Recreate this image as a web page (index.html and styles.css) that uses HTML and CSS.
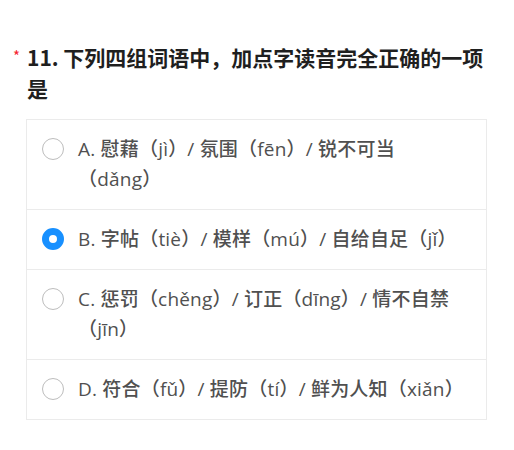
FILE: index.html
```html
<!DOCTYPE html>
<html lang="zh-CN">
<head>
<meta charset="utf-8">
<link rel="stylesheet" href="styles.css">
</head>
<body>
<div class="question">
  <div class="title"><span class="req">*</span><span class="title-text">11. 下列四组词语中，加点字读音完全正确的一项是</span></div>
  <div class="options">
    <div class="option"><span class="radio"></span><span class="label">A. 慰藉（jì）/ 氛围（fēn）/ 锐不可当<br>（dǎng）</span></div>
    <div class="option"><span class="radio checked"></span><span class="label">B. 字帖（tiè）/ 模样（mú）/ 自给自足（jǐ）</span></div>
    <div class="option"><span class="radio"></span><span class="label">C. 惩罚（chěng）/ 订正（dīng）/ 情不自禁<br>（jīn）</span></div>
    <div class="option"><span class="radio"></span><span class="label">D. 符合（fǔ）/ 提防（tí）/ 鲜为人知（xiǎn）</span></div>
  </div>
</div>
</body>
</html>
```
FILE: styles.css
```css
html, body {
  margin: 0;
  padding: 0;
  background: #fff;
}
body {
  font-family: "Noto Sans CJK SC", "Noto Sans", sans-serif;
}
.question {
  padding: 42px 0 0 0;
  width: 500px;
}
.title {
  display: flex;
  align-items: flex-start;
  padding-left: 13px;
}
.req {
  color: #f5222d;
  font-size: 15px;
  line-height: 20px;
  width: 14px;
  flex: none;
  padding-top: 4px;
}
.title-text {
  font-size: 21px;
  line-height: 31px;
  font-weight: bold;
  color: #1f1f1f;
}
.options {
  margin: 15px 0 0 26px;
  width: 459px;
  border: 1px solid #ebebeb;
}
.option {
  display: flex;
  align-items: flex-start;
  padding: 14px 12px 15px 15px;
  border-top: 1px solid #ebebeb;
}
.option:first-child {
  border-top: none;
}
.radio {
  flex: none;
  box-sizing: border-box;
  width: 22px;
  height: 22px;
  border-radius: 50%;
  border: 1.5px solid #bdbdbd;
  margin-top: 4px;
  margin-right: 14px;
}
.radio.checked {
  border: 7px solid #1890ff;
}
.label {
  font-family: "Open Sans", "Noto Sans CJK SC", sans-serif;
  font-size: 19px;
  line-height: 30px;
  font-weight: 500;
  letter-spacing: 0.2px;
  color: #505050;
}
```
